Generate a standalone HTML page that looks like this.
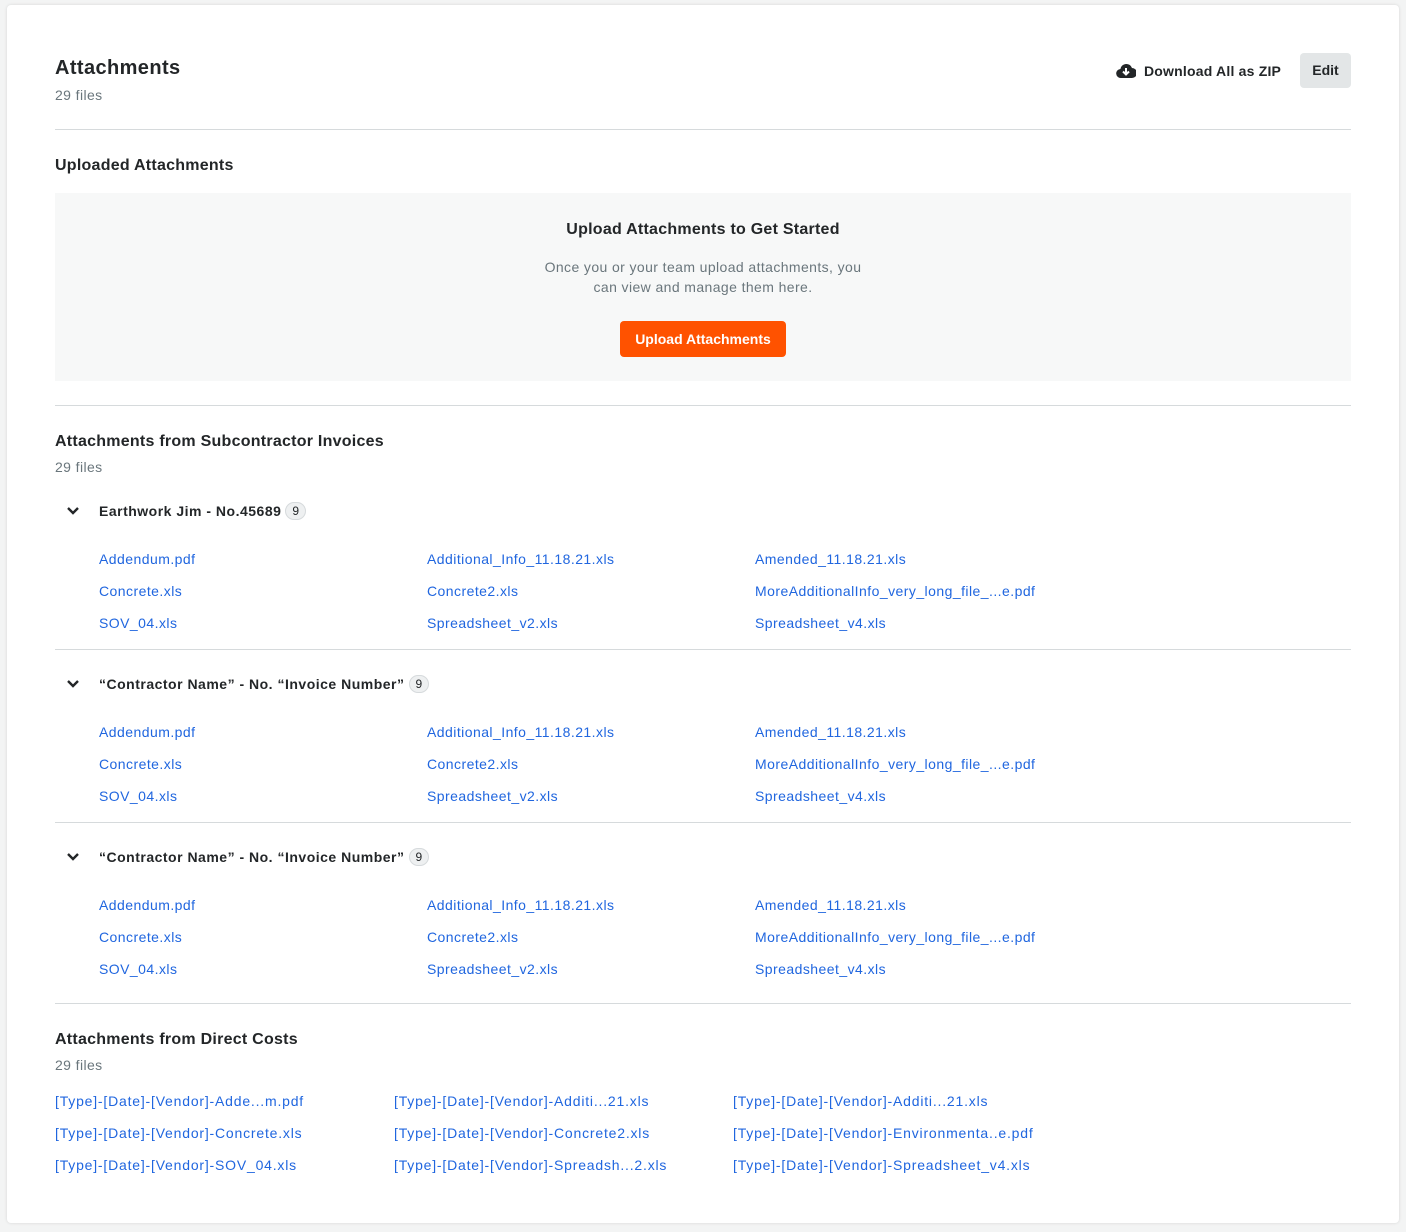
<!DOCTYPE html>
<html><head><meta charset="utf-8"><style>
*{margin:0;padding:0;box-sizing:border-box}
body{width:1406px;height:1232px;background:#f3f4f4;font-family:"Liberation Sans",sans-serif;color:#232628;position:relative;overflow:hidden}
.card{position:absolute;left:7px;top:5px;width:1392px;height:1218px;background:#fff;border-radius:4px;box-shadow:0 0 3px rgba(0,0,0,.12)}
.a{position:absolute;line-height:20px;white-space:nowrap}
.t{font-size:20px;font-weight:bold;line-height:24px;letter-spacing:.4px}
.h{font-size:16px;font-weight:bold;letter-spacing:.25px}
.s{font-size:14px;color:#6a767c;letter-spacing:.4px}
.l{font-size:14px;color:#2066df;letter-spacing:.45px}
.d{letter-spacing:.8px}
.g{font-size:14px;font-weight:bold;letter-spacing:.5px}
.hr{position:absolute;left:55px;width:1296px;height:1px;background:#d6dadc}
.badge{display:inline-block;font-size:12px;font-weight:normal;border:1px solid #d6dadc;background:#eef0f1;border-radius:10px;padding:0 6px;line-height:16px;margin-left:4px;vertical-align:1px;letter-spacing:0}
.chev{position:absolute;left:66px;width:14px;height:10px}
</style></head><body>
<div class="card"></div>
<div class="a t" style="left:55px;top:56px">Attachments</div>
<div class="a s" style="left:55px;top:85px">29 files</div>
<svg style="position:absolute;left:1116px;top:62px" width="20" height="18" viewBox="0 0 20 18"><path d="M5 16a4.5 4.5 0 0 1-.6-9A6 6 0 0 1 16 6a4.5 4.5 0 0 1 0 10z" fill="#232628"/><path d="M10 6v6M7 9.5l3 3 3-3" stroke="#fff" stroke-width="2" fill="none"/></svg>
<div class="a g" style="left:1144px;top:61px;letter-spacing:.2px">Download All as ZIP</div>
<div style="position:absolute;left:1300px;top:53px;width:51px;height:35px;background:#e3e6e7;border-radius:4px;font-size:14px;font-weight:bold;line-height:35px;text-align:center">Edit</div>
<div class="hr" style="top:129px"></div>
<div class="a h" style="left:55px;top:156px">Uploaded Attachments</div>
<div style="position:absolute;left:55px;top:193px;width:1296px;height:188px;background:#f7f8f8"></div>
<div class="a h" style="left:0;width:1406px;text-align:center;top:220px">Upload Attachments to Get Started</div>
<div class="a s" style="left:0;width:1406px;text-align:center;top:257px">Once you or your team upload attachments, you</div>
<div class="a s" style="left:0;width:1406px;text-align:center;top:277px">can view and manage them here.</div>
<div style="position:absolute;left:620px;top:321px;width:166px;height:36px;background:#ff5200;border-radius:4px;color:#fff;font-size:14px;font-weight:bold;line-height:36px;text-align:center">Upload Attachments</div>
<div class="hr" style="top:405px"></div>
<div class="a h" style="left:55px;top:432px">Attachments from Subcontractor Invoices</div>
<div class="a s" style="left:55px;top:457px">29 files</div>

<svg class="chev" style="top:506px" viewBox="0 0 14 10"><path d="M2 2l5 5 5-5" stroke="#232628" stroke-width="2.4" fill="none"/></svg>
<div class="a g" style="left:99px;top:501px">Earthwork Jim - No.45689<span class="badge">9</span></div>
<div class="a l" style="left:99px;top:549px">Addendum.pdf</div><div class="a l" style="left:427px;top:549px">Additional_Info_11.18.21.xls</div><div class="a l" style="left:755px;top:549px">Amended_11.18.21.xls</div>
<div class="a l" style="left:99px;top:581px">Concrete.xls</div><div class="a l" style="left:427px;top:581px">Concrete2.xls</div><div class="a l" style="left:755px;top:581px">MoreAdditionalInfo_very_long_file_...e.pdf</div>
<div class="a l" style="left:99px;top:613px">SOV_04.xls</div><div class="a l" style="left:427px;top:613px">Spreadsheet_v2.xls</div><div class="a l" style="left:755px;top:613px">Spreadsheet_v4.xls</div>
<div class="hr" style="top:649px"></div>

<svg class="chev" style="top:679px" viewBox="0 0 14 10"><path d="M2 2l5 5 5-5" stroke="#232628" stroke-width="2.4" fill="none"/></svg>
<div class="a g" style="left:99px;top:674px">“Contractor Name” - No. “Invoice Number”<span class="badge">9</span></div>
<div class="a l" style="left:99px;top:722px">Addendum.pdf</div><div class="a l" style="left:427px;top:722px">Additional_Info_11.18.21.xls</div><div class="a l" style="left:755px;top:722px">Amended_11.18.21.xls</div>
<div class="a l" style="left:99px;top:754px">Concrete.xls</div><div class="a l" style="left:427px;top:754px">Concrete2.xls</div><div class="a l" style="left:755px;top:754px">MoreAdditionalInfo_very_long_file_...e.pdf</div>
<div class="a l" style="left:99px;top:786px">SOV_04.xls</div><div class="a l" style="left:427px;top:786px">Spreadsheet_v2.xls</div><div class="a l" style="left:755px;top:786px">Spreadsheet_v4.xls</div>
<div class="hr" style="top:822px"></div>

<svg class="chev" style="top:852px" viewBox="0 0 14 10"><path d="M2 2l5 5 5-5" stroke="#232628" stroke-width="2.4" fill="none"/></svg>
<div class="a g" style="left:99px;top:847px">“Contractor Name” - No. “Invoice Number”<span class="badge">9</span></div>
<div class="a l" style="left:99px;top:895px">Addendum.pdf</div><div class="a l" style="left:427px;top:895px">Additional_Info_11.18.21.xls</div><div class="a l" style="left:755px;top:895px">Amended_11.18.21.xls</div>
<div class="a l" style="left:99px;top:927px">Concrete.xls</div><div class="a l" style="left:427px;top:927px">Concrete2.xls</div><div class="a l" style="left:755px;top:927px">MoreAdditionalInfo_very_long_file_...e.pdf</div>
<div class="a l" style="left:99px;top:959px">SOV_04.xls</div><div class="a l" style="left:427px;top:959px">Spreadsheet_v2.xls</div><div class="a l" style="left:755px;top:959px">Spreadsheet_v4.xls</div>
<div class="hr" style="top:1003px"></div>

<div class="a h" style="left:55px;top:1030px">Attachments from Direct Costs</div>
<div class="a s" style="left:55px;top:1055px">29 files</div>
<div class="a l d" style="left:55px;top:1091px">[Type]-[Date]-[Vendor]-Adde...m.pdf</div><div class="a l d" style="left:394px;top:1091px">[Type]-[Date]-[Vendor]-Additi...21.xls</div><div class="a l d" style="left:733px;top:1091px">[Type]-[Date]-[Vendor]-Additi...21.xls</div>
<div class="a l d" style="left:55px;top:1123px">[Type]-[Date]-[Vendor]-Concrete.xls</div><div class="a l d" style="left:394px;top:1123px">[Type]-[Date]-[Vendor]-Concrete2.xls</div><div class="a l d" style="left:733px;top:1123px">[Type]-[Date]-[Vendor]-Environmenta..e.pdf</div>
<div class="a l d" style="left:55px;top:1155px">[Type]-[Date]-[Vendor]-SOV_04.xls</div><div class="a l d" style="left:394px;top:1155px">[Type]-[Date]-[Vendor]-Spreadsh...2.xls</div><div class="a l d" style="left:733px;top:1155px">[Type]-[Date]-[Vendor]-Spreadsheet_v4.xls</div>
</body></html>
